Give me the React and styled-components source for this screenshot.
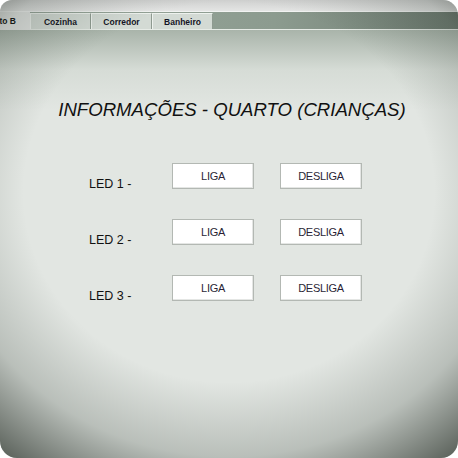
import styled, { createGlobalStyle } from "styled-components";

const GlobalStyle = createGlobalStyle`
  html, body { margin: 0; padding: 0; background: #ffffff; }
  body { font-family: "Liberation Sans", Arial, sans-serif; }
`;

const rows = ["LED 1 -", "LED 2 -", "LED 3 -"];
const tabs = ["Cozinha", "Corredor", "Banheiro"];

function App() {
  return (
    <>
      <GlobalStyle />
      <Screen>
        <TopBar />
        <TabStrip>
          <ActiveTab><span>Quarto B</span></ActiveTab>
          {tabs.map((t) => (
            <Tab key={t}>{t}</Tab>
          ))}
        </TabStrip>
        <Content>
          <Title>INFORMAÇÕES - QUARTO (CRIANÇAS)</Title>
          <LedGrid>
            {rows.map((r) => (
              <LedRow key={r}>
                <LedLabel>{r}</LedLabel>
                <Button>LIGA</Button>
                <Button>DESLIGA</Button>
              </LedRow>
            ))}
          </LedGrid>
        </Content>
        <Vignette />
      </Screen>
    </>
  );
}

const Screen = styled.div`
  position: relative;
  width: 458px;
  height: 458px;
  display: flex;
  flex-direction: column;
  overflow: hidden;
  border-radius: 12px 15px 17px 17px;
  background: #e2e6e2;
`;

const TopBar = styled.div`
  height: 11px;
  background: linear-gradient(180deg, #cfd0cf 0%, #e4e5e4 100%);
  border-bottom: 1px solid #f2f3f2;
`;

const TabStrip = styled.div`
  height: 17px;
  display: flex;
  background: linear-gradient(90deg, #9aa89d 0%, #8c9b8f 60%, #6f7c72 100%);
  border-bottom: 1px solid #e6ebe6;
`;

const ActiveTab = styled.div`
  width: 30px;
  display: flex;
  justify-content: flex-end;
  align-items: center;
  overflow: hidden;
  background: #e6e8e6;
  margin-bottom: -1px;
  font-size: 8.5px;
  font-weight: bold;
  color: #111;
  white-space: nowrap;
  span { padding-right: 14px; }
`;

const Tab = styled.div`
  width: 59px;
  display: flex;
  justify-content: center;
  align-items: center;
  margin-top: 1px;
  background: #d3dad4;
  border-top: 1px solid #eef2ee;
  border-left: 1px solid #eef2ee;
  border-right: 1px solid #8e9a90;
  font-size: 8.5px;
  font-weight: bold;
  color: #151525;
`;

const Content = styled.div`
  flex: 1;
  padding-top: 69px;
  background: linear-gradient(180deg, #a9b4aa 0px, #d6dcd6 40px, #e2e6e2 80px);
`;

const Title = styled.h1`
  margin: 0 0 0 6px;
  text-align: center;
  font-size: 18.6px;
  font-weight: normal;
  font-style: italic;
  line-height: 22px;
  color: #111;
`;

const LedGrid = styled.div`
  margin-top: 42px;
  padding-left: 89px;
  display: flex;
  flex-direction: column;
  gap: 30px;
`;

const LedRow = styled.div`
  display: grid;
  grid-template-columns: 57px 82px 82px;
  column-gap: 26px;
  height: 26px;
`;

const LedLabel = styled.div`
  align-self: end;
  margin-bottom: -3px;
  font-size: 12.5px;
  line-height: 15px;
  white-space: nowrap;
  color: #111;
`;

const Button = styled.div`
  display: flex;
  align-items: center;
  justify-content: center;
  padding-bottom: 1px;
  background: #ffffff;
  border: 1px solid #b3b8b3;
  box-shadow: inset -1px -1px 0 #e4e6e4;
  font-size: 11px;
  letter-spacing: -0.3px;
  color: #2a1f36;
`;

const Vignette = styled.div`
  position: absolute;
  inset: 0;
  pointer-events: none;
  background:
    radial-gradient(ellipse 80% 74% at 50% 42%, rgba(40, 52, 42, 0) 56%, rgba(40, 52, 42, 0.22) 78%, rgba(30, 38, 30, 0.7) 100%);
`;

export default App;
